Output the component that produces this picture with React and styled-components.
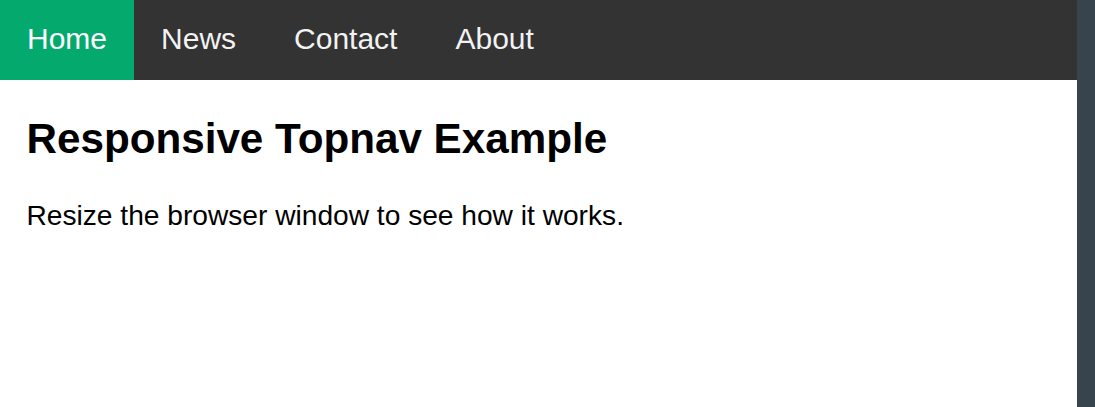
import React from 'react';
import styled, { createGlobalStyle } from 'styled-components';

const GlobalStyle = createGlobalStyle`
	html, body {
		margin: 0;
		padding: 0;
		background: #fff;
	}
	body {
		font-family: "Liberation Sans", Arial, sans-serif;
	}
`

const Page = styled.div`
	display: flex;
	width: 1095px;
	height: 407px;
	overflow: hidden;
`

const Main = styled.div`
	flex: 1;
	display: flex;
	flex-flow: column;
`

const SideStrip = styled.div`
	width: 18px;
	flex: none;
	background-color: #37444e;
`

const Topnav = styled.nav`
	display: flex;
	background-color: #333;
	height: 80px;
`

const NavLink = styled.a`
	display: block;
	color: ${({ $active }) => ($active ? '#fff' : '#f2f2f2')};
	background-color: ${({ $active }) => ($active ? '#04AA6D' : 'transparent')};
	text-align: center;
	padding: 22px 27px 24px;
	margin-left: ${({ $spaced }) => ($spaced ? '4px' : '0')};
	line-height: 34px;
	font-size: 30px;
	text-decoration: none;
	cursor: pointer;
`

const Content = styled.div`
	padding-left: 26.5px;
	h2 {
		font-size: 42.2px;
		font-weight: bold;
		margin: 35px 0;
	}
	p {
		font-size: 28.15px;
		margin: 0;
		padding-top: 2px;
	}
`

const App = () => {
	return (
		<>
			<GlobalStyle />
			<Page>
				<Main>
					<Topnav>
						<NavLink $active>Home</NavLink>
						<NavLink>News</NavLink>
						<NavLink $spaced>Contact</NavLink>
						<NavLink $spaced>About</NavLink>
					</Topnav>
					<Content>
						<h2>Responsive Topnav Example</h2>
						<p>Resize the browser window to see how it works.</p>
					</Content>
				</Main>
				<SideStrip />
			</Page>
		</>
	);
}

export default App;
